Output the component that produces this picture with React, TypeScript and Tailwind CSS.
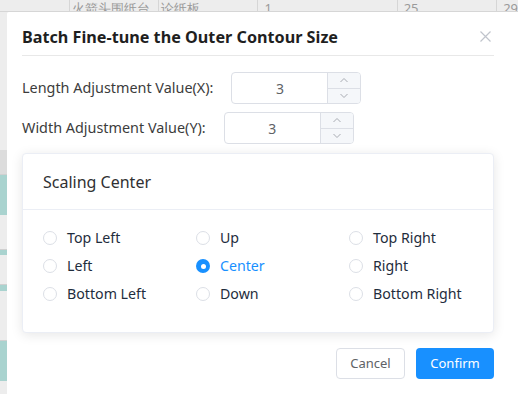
import React, { useState } from 'react';

const positions = [
  'Top Left', 'Up', 'Top Right',
  'Left', 'Center', 'Right',
  'Bottom Left', 'Down', 'Bottom Right',
];

const Stepper: React.FC<{ value: number }> = ({ value }) => (
  <div className="flex h-[32px] w-[130px] rounded-[4px] border border-[#dcdfe6] bg-white overflow-hidden">
    <div className="flex-1 flex items-center justify-center text-[14px] text-[#606266]">{value}</div>
    <div className="w-[33px] flex flex-col border-l border-[#dcdfe6] bg-[#f5f7fa]">
      <div className="flex-1 flex items-center justify-center border-b border-[#dcdfe6]">
        <svg width="10" height="6" viewBox="0 0 10 6" fill="none"><path d="M1.5 5L5 1.5L8.5 5" stroke="#a8abb2" strokeWidth="1" /></svg>
      </div>
      <div className="flex-1 flex items-center justify-center">
        <svg width="10" height="6" viewBox="0 0 10 6" fill="none"><path d="M1.5 1L5 4.5L8.5 1" stroke="#a8abb2" strokeWidth="1" /></svg>
      </div>
    </div>
  </div>
);

const App: React.FC = () => {
  const [center, setCenter] = useState('Center');

  return (
    <div className="relative w-[518px] h-[394px] overflow-hidden bg-[#ededed]" style={{ fontFamily: '"Noto Sans", "Open Sans", sans-serif' }}>
      {/* table behind the mask */}
      <div className="flex h-[12px] border-b border-[#d6d6d6] text-[13px] leading-[12px] text-[#9a9a9a] overflow-hidden">
        <div className="w-[70px] border-r border-[#d6d6d6]" />
        <div className="w-[90px] border-r border-[#d6d6d6] pl-[2px] pt-[2px]">火箭头围纸台</div>
        <div className="w-[100px] border-r border-[#d6d6d6] pl-[2px] pt-[2px]">论纸板</div>
        <div className="w-[140px] border-r border-[#d6d6d6] pl-[6px] pt-[2px]">1</div>
        <div className="w-[100px] border-r border-[#d6d6d6] pl-[6px] pt-[2px]">25</div>
        <div className="flex-1 pl-[6px] pt-[2px]">29</div>
      </div>
      <div className="absolute left-0 top-[150px] w-[7px] flex flex-col">
        <div className="h-[25px] border-b border-[#d0d0d0] bg-[#dcdcdc]" />
        <div className="h-[40px] bg-[#a9d3cf]" />
        <div className="h-[35px] border-b border-[#d0d0d0]" />
        <div className="h-[5px] bg-[#a9d3cf]" />
        <div className="h-[30px] border-b border-[#d0d0d0]" />
        <div className="h-[6px] bg-[#a9d3cf]" />
        <div className="h-[50px] border-b border-[#d0d0d0]" />
        <div className="h-[40px] bg-[#a9d3cf]" />
      </div>

      {/* modal */}
      <div className="absolute left-[7px] top-[12px] w-[520px] h-[400px] bg-white rounded-[2px] pl-[15px] text-[#303133]">
        <div className="w-[472px]">
          <div className="relative h-[44px] flex items-center border-b border-[#e8e8e8]">
            <span className="text-[16.2px] font-bold text-[#1f1f1f] pt-[8px]">Batch Fine-tune the Outer Contour Size</span>
            <svg className="absolute right-[3px] top-[19px]" width="11" height="11" viewBox="0 0 11 11" fill="none">
              <path d="M0.5 0.5L10.5 10.5M10.5 0.5L0.5 10.5" stroke="#c0c4cc" strokeWidth="1.2" />
            </svg>
          </div>

          <div className="mt-[16px] flex flex-col gap-[8px]">
            <div className="flex items-center">
              <span className="text-[14.4px] text-[#3c3c3c] mr-[18px]">Length Adjustment Value(X):</span>
              <Stepper value={3} />
            </div>
            <div className="flex items-center">
              <span className="text-[14.4px] text-[#3c3c3c] mr-[18px]">Width Adjustment Value(Y):</span>
              <Stepper value={3} />
            </div>
          </div>

          <div className="mt-[9px] h-[180px] rounded-[4px] border border-[#ebeef5] bg-white shadow-[0_2px_12px_0_rgba(0,0,0,0.1)]">
            <div className="h-[56px] flex items-center pl-[20px] border-b border-[#ebeef5] text-[16px] text-[#303133]">
              Scaling Center
            </div>
            <div className="grid grid-cols-[153px_153px_1fr] pl-[20px] pt-[18px] gap-y-[8px]">
              {positions.map((p) => {
                const on = p === center;
                return (
                  <label key={p} className="flex items-center h-[20px] cursor-pointer" onClick={() => setCenter(p)}>
                    {on ? (
                      <span className="w-[14px] h-[14px] rounded-full bg-[#1890ff] flex items-center justify-center">
                        <span className="w-[5px] h-[5px] rounded-full bg-white" />
                      </span>
                    ) : (
                      <span className="w-[14px] h-[14px] rounded-full border border-[#dcdfe6] bg-white" />
                    )}
                    <span className={`ml-[10px] text-[14.2px] ${on ? 'text-[#1890ff]' : 'text-[#1f2d3d]'}`}>{p}</span>
                  </label>
                );
              })}
            </div>
          </div>

          <div className="mt-[15px] flex justify-end gap-[11px]">
            <button className="w-[69px] h-[31px] rounded-[4px] border border-[#dcdfe6] bg-white text-[13px] text-[#606266]">Cancel</button>
            <button className="w-[78px] h-[31px] rounded-[4px] bg-[#1890ff] text-[13px] text-white">Confirm</button>
          </div>
        </div>
      </div>
    </div>
  );
};

export default App;
